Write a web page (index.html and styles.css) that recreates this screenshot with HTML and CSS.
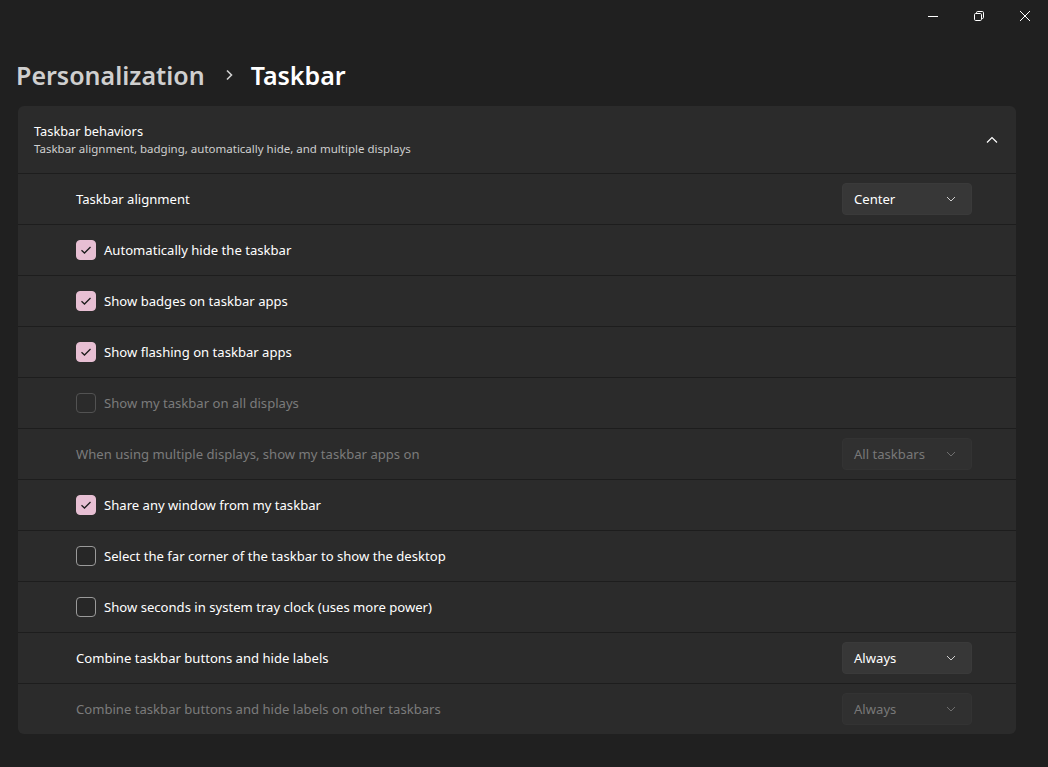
FILE: index.html
```html
<!DOCTYPE html>
<html lang="en">
<head>
<meta charset="utf-8">
<title>Taskbar</title>
<link rel="stylesheet" href="styles.css">
</head>
<body>
<div class="titlebar">
  <div class="winbtn">
    <svg width="10" height="10" viewBox="0 0 10 10"><path d="M0 5.5h10" stroke="#fff" stroke-width="1"/></svg>
  </div>
  <div class="winbtn">
    <svg width="10" height="10" viewBox="0 0 10 10" fill="none" stroke="#fff" stroke-width="1"><rect x="0.5" y="2.5" width="7" height="7" rx="1.2"/><path d="M2.5 2.5V1.7q0-1.2 1.2-1.2H8.3q1.2 0 1.2 1.2V6.3q0 1.2-1.2 1.2H7.5"/></svg>
  </div>
  <div class="winbtn">
    <svg width="10" height="10" viewBox="0 0 10 10"><path d="M0 0L10 10M10 0L0 10" stroke="#fff" stroke-width="1"/></svg>
  </div>
</div>

<h1 class="crumbs">
  <span class="crumb-parent">Personalization</span>
  <svg class="crumb-sep" width="10" height="12" viewBox="0 0 10 12"><path d="M3 1.5L7.5 6L3 10.5" fill="none" stroke="#d0d0d0" stroke-width="1.6"/></svg>
  <span class="crumb-current">Taskbar</span>
</h1>

<section class="card">
  <div class="card-head">
    <div class="head-text">
      <div class="head-title">Taskbar behaviors</div>
      <div class="head-sub">Taskbar alignment, badging, automatically hide, and multiple displays</div>
    </div>
    <svg class="head-chevron" width="12" height="8" viewBox="0 0 12 8"><path d="M1 6.5L6 1.5L11 6.5" fill="none" stroke="#fff" stroke-width="1.2"/></svg>
  </div>

  <div class="row">
    <span class="label">Taskbar alignment</span>
    <div class="select">Center<svg class="sel-chev" width="10" height="6" viewBox="0 0 10 6"><path d="M1 1L5 5L9 1" fill="none" stroke="#cfcfcf" stroke-width="1"/></svg></div>
  </div>

  <div class="row">
    <span class="check on"><svg width="12" height="10" viewBox="0 0 12 10"><path d="M1.5 5.2L4.5 8L10.5 2" fill="none" stroke="#1c1c1c" stroke-width="1.3"/></svg></span>
    <span class="label">Automatically hide the taskbar</span>
  </div>

  <div class="row">
    <span class="check on"><svg width="12" height="10" viewBox="0 0 12 10"><path d="M1.5 5.2L4.5 8L10.5 2" fill="none" stroke="#1c1c1c" stroke-width="1.3"/></svg></span>
    <span class="label">Show badges on taskbar apps</span>
  </div>

  <div class="row">
    <span class="check on"><svg width="12" height="10" viewBox="0 0 12 10"><path d="M1.5 5.2L4.5 8L10.5 2" fill="none" stroke="#1c1c1c" stroke-width="1.3"/></svg></span>
    <span class="label">Show flashing on taskbar apps</span>
  </div>

  <div class="row disabled">
    <span class="check"></span>
    <span class="label">Show my taskbar on all displays</span>
  </div>

  <div class="row disabled">
    <span class="label">When using multiple displays, show my taskbar apps on</span>
    <div class="select">All taskbars<svg class="sel-chev" width="10" height="6" viewBox="0 0 10 6"><path d="M1 1L5 5L9 1" fill="none" stroke="#6e6e6e" stroke-width="1"/></svg></div>
  </div>

  <div class="row">
    <span class="check on"><svg width="12" height="10" viewBox="0 0 12 10"><path d="M1.5 5.2L4.5 8L10.5 2" fill="none" stroke="#1c1c1c" stroke-width="1.3"/></svg></span>
    <span class="label">Share any window from my taskbar</span>
  </div>

  <div class="row">
    <span class="check"></span>
    <span class="label">Select the far corner of the taskbar to show the desktop</span>
  </div>

  <div class="row">
    <span class="check"></span>
    <span class="label">Show seconds in system tray clock (uses more power)</span>
  </div>

  <div class="row">
    <span class="label">Combine taskbar buttons and hide labels</span>
    <div class="select">Always<svg class="sel-chev" width="10" height="6" viewBox="0 0 10 6"><path d="M1 1L5 5L9 1" fill="none" stroke="#cfcfcf" stroke-width="1"/></svg></div>
  </div>

  <div class="row disabled">
    <span class="label">Combine taskbar buttons and hide labels on other taskbars</span>
    <div class="select">Always<svg class="sel-chev" width="10" height="6" viewBox="0 0 10 6"><path d="M1 1L5 5L9 1" fill="none" stroke="#6e6e6e" stroke-width="1"/></svg></div>
  </div>
</section>
</body>
</html>
```
FILE: styles.css
```css
* { box-sizing: border-box; }
html, body { margin: 0; padding: 0; }
body {
  background: #202020;
  color: #ffffff;
  font-family: "Noto Sans", "Open Sans", sans-serif;
  font-size: 13px;
  width: 1048px;
  height: 767px;
  overflow: hidden;
}
.titlebar {
  height: 32px;
  display: flex;
  justify-content: flex-end;
}
.winbtn {
  width: 46px;
  height: 32px;
  display: flex;
  align-items: center;
  justify-content: center;
}
.winbtn svg { display: block; }
.crumbs {
  margin: 0;
  height: 74px;
  padding: 23px 0 0 16px;
  display: flex;
  align-items: flex-start;
  font-size: 25px;
  font-weight: 600;
  line-height: 40px;
}
.crumb-parent { color: #cfcfcf; }
.crumb-sep { margin: 14px 17px 0 19px; }
.crumb-current { color: #ffffff; }
.card {
  margin: 0 32px 0 18px;
  background: #2b2b2b;
  border-radius: 6px;
  overflow: hidden;
}
.card-head {
  height: 67px;
  padding: 0 18px 0 16px;
  display: flex;
  align-items: center;
  justify-content: space-between;
}
.head-title { font-size: 12.8px; line-height: 19px; color: #fff; }
.head-sub { font-size: 11.5px; line-height: 16px; color: #cfcfcf; }
.row {
  height: 51px;
  border-top: 1px solid #1d1d1d;
  display: flex;
  align-items: center;
  padding: 0 44px 0 58px;
  font-size: 13.1px;
}
.label { flex: 1; color: #fff; }
.row.disabled .label { color: #7b7b7b; }
.check {
  width: 20px;
  height: 20px;
  border-radius: 4px;
  border: 1px solid #9a9a9a;
  background: #272727;
  margin-right: 8px;
  display: flex;
  align-items: center;
  justify-content: center;
}
.check.on {
  background: #e7bfd3;
  border-color: #e7bfd3;
}
.row.disabled .check { border-color: #525252; background: #2b2b2b; }
.select {
  width: 130px;
  height: 32px;
  border-radius: 4px;
  background: #373737;
  border: 1px solid #3a3a3a;
  display: flex;
  align-items: center;
  justify-content: space-between;
  padding: 0 15px 0 11px;
  color: #fff;
}
.row.disabled .select { background: #303030; border-color: #333; color: #787878; }
.sel-chev { display: block; }
```
